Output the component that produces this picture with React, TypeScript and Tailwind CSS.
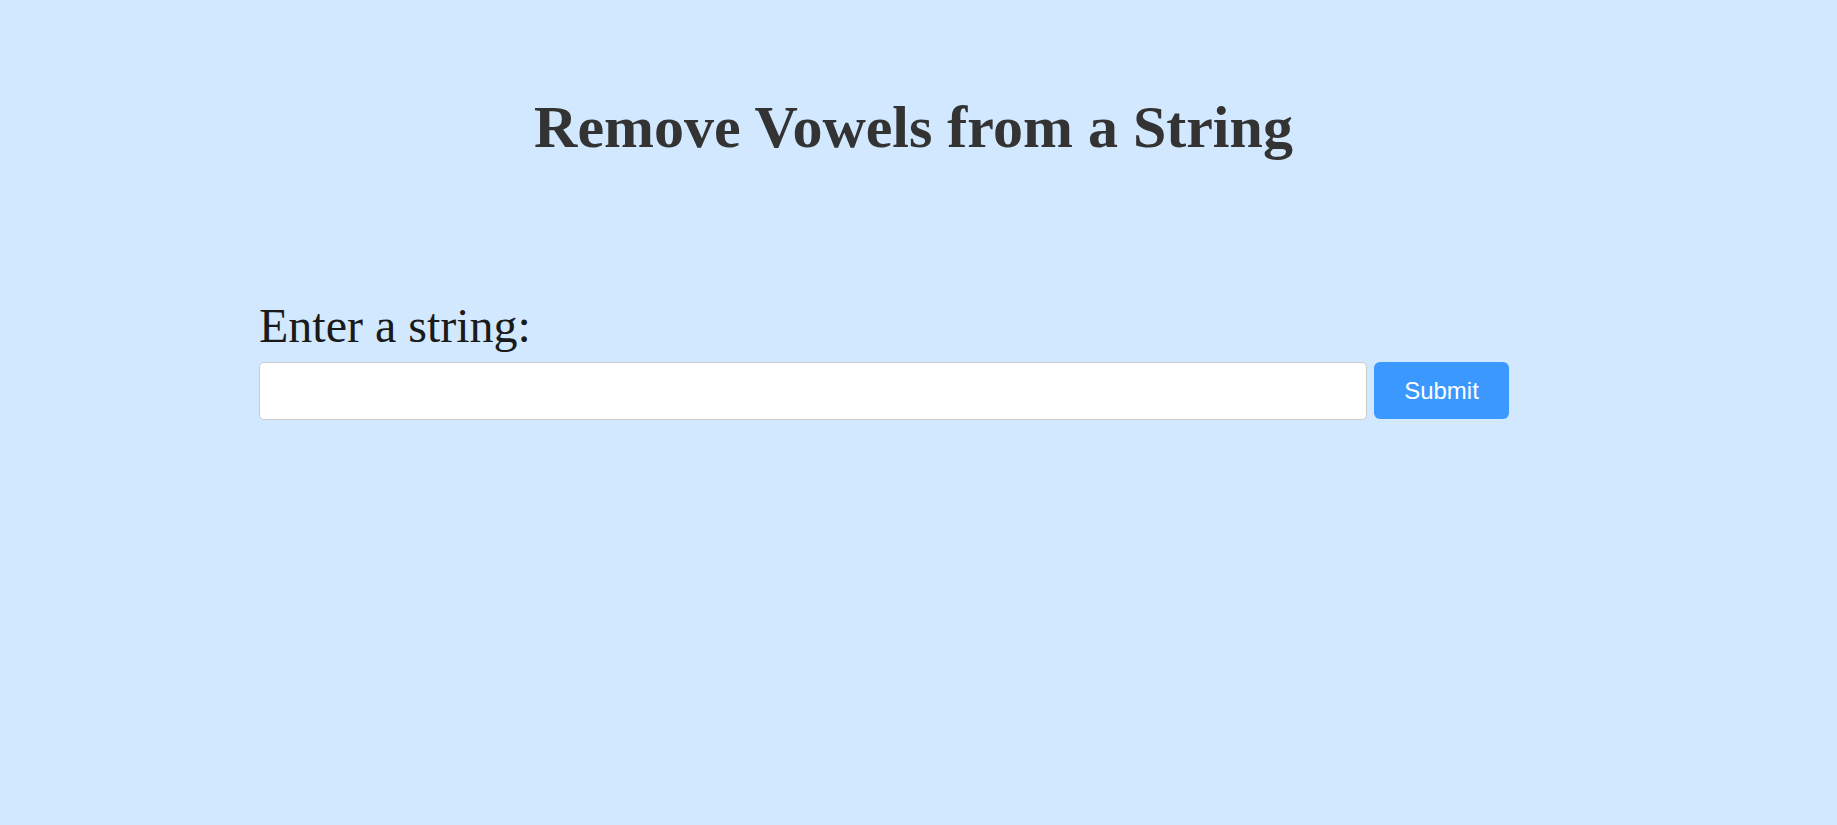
import React from "react";

const App = () => {
  return (
    <div className="min-h-[825px] w-full bg-[#d1e8fe]">
      <h1 className="pr-[10px] pt-[94px] text-center text-[60px] font-bold leading-[1.107] text-[#333333] [font-family:'Liberation_Serif',serif]">
        Remove Vowels from a String
      </h1>

      <form className="ml-[259px] mt-[139px] flex flex-col" onSubmit={(e) => e.preventDefault()}>
        <label className="text-[48px] leading-[1.107] text-[#1a1a1a] [font-family:'Liberation_Serif',serif]">
          Enter a string:
        </label>
        <div className="mt-[9px] flex items-center gap-[7px]">
          <input
            type="text"
            className="h-[58px] w-[1108px] rounded-[5px] border border-[#cccccc] bg-white px-3 text-[20px] outline-none"
          />
          <button
            type="submit"
            className="h-[57px] w-[135px] rounded-[6px] bg-[#3a98fe] text-[24px] text-white [font-family:'Liberation_Sans',sans-serif]"
          >
            Submit
          </button>
        </div>
      </form>
    </div>
  );
};

export default App;
